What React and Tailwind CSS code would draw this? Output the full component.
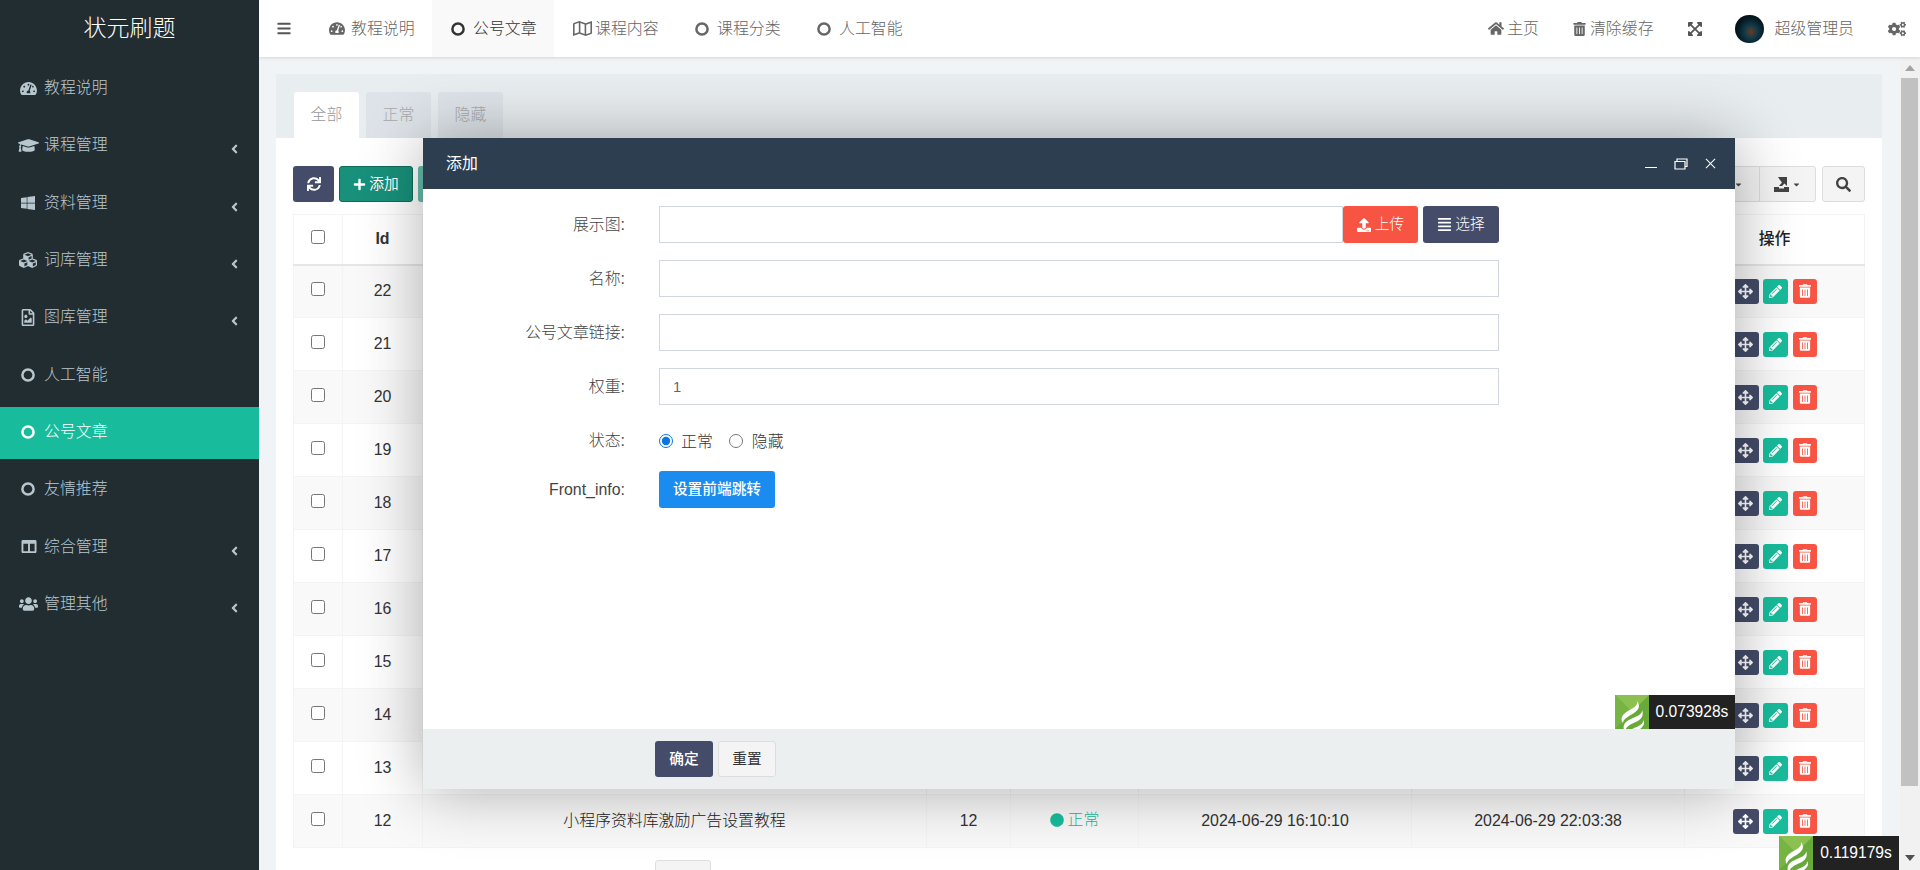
import React from "react";
import {
  FaTachometerAlt, FaGraduationCap, FaWindows, FaCubes, FaRegFileImage,
  FaColumns, FaUsers, FaAngleLeft, FaBars, FaRegMap, FaHome, FaTrashAlt, FaExpandArrowsAlt,
  FaCogs, FaSync, FaPlus, FaCaretDown, FaSearch, FaUpload, FaAlignJustify, FaArrowsAlt, FaPencilAlt, FaCircle,
} from "react-icons/fa";

// fa-circle-o has a heavier ring than the FA5 regular circle
const Ring = ({ className }) => (
  <svg viewBox="0 0 14 14" className={className} fill="none" stroke="currentColor" strokeWidth="2.5">
    <circle cx="7" cy="7" r="5.6" />
  </svg>
);

const ringCls = "w-[14px] h-[14px]";

const menu = [
  { icon: FaTachometerAlt, cls: "w-[17px] h-[15px] -ml-[1px]", label: "教程说明" },
  { icon: FaGraduationCap, cls: "w-[21px] h-[17px] -ml-[3px]", label: "课程管理", more: true },
  { icon: FaWindows, cls: "w-[16px] h-[16px] -ml-[1px]", label: "资料管理", more: true },
  { icon: FaCubes, cls: "w-[20px] h-[18px] -ml-[3px]", label: "词库管理", more: true },
  { icon: FaRegFileImage, cls: "w-[14px] h-[17px]", label: "图库管理", more: true },
  { icon: Ring, cls: ringCls, label: "人工智能" },
  { icon: Ring, cls: ringCls, label: "公号文章", active: true },
  { icon: Ring, cls: ringCls, label: "友情推荐" },
  { icon: FaColumns, cls: "w-[16px] h-[15px]", label: "综合管理", more: true },
  { icon: FaUsers, cls: "w-[19px] h-[16px] -ml-[2px]", label: "管理其他", more: true },
];

const tabs = [
  { icon: FaTachometerAlt, cls: "w-[16px] h-[15px]", label: "教程说明" },
  { icon: Ring, cls: ringCls, label: "公号文章", active: true },
  { icon: FaRegMap, cls: "w-[19px] h-[17px]", label: "课程内容" },
  { icon: Ring, cls: ringCls, label: "课程分类" },
  { icon: Ring, cls: ringCls, label: "人工智能" },
];

const ids = [22, 21, 20, 19, 18, 17, 16, 15, 14, 13, 12];

const Sidebar = () => (
  <aside className="w-[259px] shrink-0 bg-[#222d32] text-[#b8c7ce]">
    <div className="h-[63px] pb-[6px] flex items-center justify-center text-[23px] text-white">状元刷题</div>
    {menu.map((m) => (
      <div
        key={m.label}
        className={`h-[52px] mb-[5.35px] pl-[21px] pr-[20px] flex items-center text-[15.9px] ${m.active ? "bg-[#18bc9c] text-white" : ""}`}
      >
        <span className="w-[23px] pb-[2px] shrink-0"><m.icon className={m.cls} /></span>
        <span className="flex-1 pb-[2px]">{m.label}</span>
        {m.more && <FaAngleLeft className="w-[9px] h-[14px] mt-[6px]" />}
      </div>
    ))}
  </aside>
);

const Header = () => (
  <header className="relative z-10 h-[57px] bg-white shadow-[0_1px_3px_rgba(0,0,0,0.12)] flex items-center text-[15.9px] text-[#666]">
    <div className="w-[51px] h-full pl-[18px] flex items-center text-[#555]">
      <FaBars className="w-[14px] h-[15px]" />
    </div>
    {tabs.map((t) => (
      <div key={t.label} className={`w-[122px] h-full pl-[18.5px] flex items-center ${t.active ? "bg-[#f9f9f9] text-[#333]" : ""}`}>
        <span className="w-[22.5px] shrink-0"><t.icon className={`${t.cls} ${t.active ? "text-[#333]" : "text-[#666]"}`} /></span>
        <span>{t.label}</span>
      </div>
    ))}
    <div className="ml-auto flex items-center pr-[14px]">
      <FaHome className="w-[16px] h-[15px] text-[#666] mr-[3px]" />
      <span>主页</span>
      <FaTrashAlt className="w-[13px] h-[14px] text-[#666] ml-[34px] mr-[4px]" />
      <span>清除缓存</span>
      <FaExpandArrowsAlt className="w-[16px] h-[16px] text-[#555] ml-[33px]" />
      <span className="w-[29px] h-[28px] ml-[32px] rounded-full bg-[radial-gradient(ellipse_at_55%_60%,#6b3a20_0%,#123a4a_28%,#04181f_60%,#020a0e_100%)]" />
      <span className="ml-[11px]">超级管理员</span>
      <FaCogs className="w-[18px] h-[16px] text-[#666] ml-[34px]" />
    </div>
  </header>
);

const TraceLogo = () => (
  <svg viewBox="0 0 34 42" className="w-[34px] h-[42px] shrink-0">
    <rect width="34" height="42" fill="#69a93a" />
    <path d="M0 0H34L17 17Z" fill="#8cc152" />
    <path d="M0 0L17 17L0 34Z" fill="#76b543" />
    <path d="M22 6C24 12 14 14 9 19C5 23 7 27 8 28C8 24 14 21 19 18C25 14 25 10 22 6Z" fill="#fff" />
    <path d="M27 15C28 21 17 22 11 27C7 31 9 35 10 37C10 32 16 29 21 27C27 24 29 20 27 15Z" fill="#fff" />
    <path d="M28 25C29 31 19 32 14 36C11 38 12 41 13 42H20C18 38 22 36 25 34C29 31 30 28 28 25Z" fill="#fff" />
  </svg>
);

const Timer = ({ value, className }) => (
  <div className={`absolute h-[34px] flex items-start overflow-hidden ${className}`}>
    <TraceLogo />
    <div className="w-[86px] h-[34px] bg-[#222] text-white text-[15.6px] flex items-center justify-center">{value}</div>
  </div>
);

const ActionButtons = () => (
  <div className="flex justify-center gap-[4.5px] text-white">
    <span className="w-[26px] h-[25px] rounded-[3px] bg-[#444c69] flex items-center justify-center"><FaArrowsAlt className="w-[15px] h-[15px]" /></span>
    <span className="w-[25px] h-[25px] rounded-[3px] bg-[#18bc9c] flex items-center justify-center"><FaPencilAlt className="w-[13px] h-[13px]" /></span>
    <span className="w-[24px] h-[25px] rounded-[3px] bg-[#f75444] flex items-center justify-center"><FaTrashAlt className="w-[12px] h-[14px]" /></span>
  </div>
);

const cell = "border border-[#f4f4f4] text-center p-0";

const DataTable = () => (
  <table className="w-[1571px] table-fixed border-collapse text-[15.9px] text-[#333]">
    <colgroup>
      <col className="w-[49px]" />
      <col className="w-[80px]" />
      <col className="w-[504px]" />
      <col className="w-[84px]" />
      <col className="w-[128px]" />
      <col className="w-[273px]" />
      <col className="w-[273px]" />
      <col className="w-[180px]" />
    </colgroup>
    <thead>
      <tr className="h-[50px]">
        <th className={`${cell} border-b-2 border-b-[#e4e6e8]`}><input type="checkbox" className="block mx-auto w-[14px] h-[14px] mb-[5px]" /></th>
        <th className={`${cell} border-b-2 border-b-[#e4e6e8] font-bold`}>Id</th>
        <th className={`${cell} border-b-2 border-b-[#e4e6e8]`} colSpan={5} />
        <th className={`${cell} border-b-2 border-b-[#e4e6e8] font-medium text-[#222]`}>操作</th>
      </tr>
    </thead>
    <tbody>
      {ids.map((id, i) => (
        <tr key={id} className={`h-[53px] ${i % 2 === 0 ? "bg-[#f9f9f9]" : "bg-white"}`}>
          <td className={cell}><input type="checkbox" className="block mx-auto w-[14px] h-[14px] mb-[5px]" /></td>
          <td className={cell}>{id}</td>
          <td className={`${cell} text-[#222]`}>{id === 12 && "小程序资料库激励广告设置教程"}</td>
          <td className={cell}>{id === 12 && 12}</td>
          <td className={cell}>
            {id === 12 && (
              <span className="inline-flex items-center gap-[4px] text-[#18bc9c]">
                <FaCircle className="w-[14px] h-[14px]" />正常
              </span>
            )}
          </td>
          <td className={cell}>{id === 12 && "2024-06-29 16:10:10"}</td>
          <td className={cell}>{id === 12 && "2024-06-29 22:03:38"}</td>
          <td className={cell}><ActionButtons /></td>
        </tr>
      ))}
    </tbody>
  </table>
);

const Toolbar = () => (
  <div className="h-[36px] mb-[12px] flex items-center justify-between">
    <div className="flex gap-[5px] text-white text-[14.7px] font-normal">
      <span className="w-[41px] h-[36px] rounded-[3px] bg-[#444c69] flex items-center justify-center"><FaSync className="w-[14px] h-[14px]" /></span>
      <span className="w-[74px] h-[36px] rounded-[3px] bg-[#18907a] border border-[#0f6b59] flex items-center justify-center gap-[3px]"><FaPlus className="w-[13px] h-[13px]" />添加</span>
      <span className="w-[74px] h-[36px] rounded-[3px] bg-[#66bcaa]" />
    </div>
    <div className="flex gap-[6px] text-[#444]">
      <div className="flex h-[36px] rounded-[3px] bg-[#f4f4f4] border border-[#ddd] divide-x divide-[#ddd]">
        <span className="w-[60px] flex items-center justify-center gap-[4px]"><FaColumns className="w-[14px] h-[14px]" /><FaCaretDown className="w-[9px] h-[9px]" /></span>
        <span className="w-[55px] flex items-center justify-center gap-[3px]">
          <svg viewBox="0 0 15 16" className="w-[15px] h-[16px]" fill="currentColor">
            <path d="M0 11H5V12.5H10V11H15V16H0Z" />
            <path d="M4 1H13V10L10.5 7.5L8 10H5L8 6.5L6 4Z" />
          </svg>
          <FaCaretDown className="w-[9px] h-[9px]" />
        </span>
      </div>
      <span className="w-[43px] h-[36px] rounded-[3px] bg-[#f4f4f4] border border-[#ddd] flex items-center justify-center"><FaSearch className="w-[15px] h-[15px]" /></span>
    </div>
  </div>
);

const Pagination = () => (
  <div className="mt-[12px] flex items-start text-[15.9px] text-[#333]">
    <span className="mt-[7px] w-[362px]">显示第 1 到第 10 条记录，总共 19 条记录 每页显示</span>
    <span className="w-[56px] h-[36px] rounded-[3px] bg-[#f4f4f4] border border-[#ddd]" />
    <span className="mt-[7px] ml-[8px]">条记录</span>
  </div>
);

const Field = ({ label, children, className = "h-[37px] mb-[17px]" }) => (
  <div className={`flex items-center ${className}`}>
    <label className="w-[202px] shrink-0 pt-[1px] text-right text-[15.9px] text-[#444]">{label}:</label>
    <div className="ml-[34px] w-[840px] flex items-center">{children}</div>
  </div>
);

const inputCls = "w-full h-[37px] px-[13px] border border-[#d2d6de] bg-white text-[14.7px] text-[#666] outline-none";

const Modal = () => (
  <div className="absolute left-[423px] top-[138px] z-20 w-[1312px] h-[651px] flex flex-col bg-white shadow-[1px_1px_60px_rgba(0,0,0,0.32)]">
    <div className="h-[51px] shrink-0 pl-[23px] pr-[19px] bg-[#2c3e50] text-white text-[15.9px] font-normal flex items-center justify-between">
      <span>添加</span>
      <span className="flex items-center gap-[17px]">
        <svg viewBox="0 0 12 12" className="w-[12px] h-[12px]" stroke="currentColor" fill="none" strokeWidth="1"><path d="M0 9.5H12" /></svg>
        <svg viewBox="0 0 14 12" className="w-[14px] h-[12px]" stroke="currentColor" fill="none" strokeWidth="1.2"><path d="M1 3.5H11V11H1ZM3 3V1H13V8.5H11" /></svg>
        <svg viewBox="0 0 12 12" className="w-[11px] h-[11px]" stroke="currentColor" fill="none" strokeWidth="1.1"><path d="M1 1L11 11M11 1L1 11" /></svg>
      </span>
    </div>
    <div className="relative flex-1 pt-[17px] overflow-hidden">
      <Field label="展示图">
        <input className={`${inputCls} flex-1 min-w-0`} readOnly />
        <button className="w-[75px] h-[37px] shrink-0 rounded-[3px] bg-[#f75444] text-white text-[14.7px] flex items-center justify-center gap-[4px]"><FaUpload className="w-[14px] h-[14px]" />上传</button>
        <button className="w-[76px] h-[37px] shrink-0 ml-[5px] rounded-[3px] bg-[#444c69] text-white text-[14.7px] flex items-center justify-center gap-[3px]"><FaAlignJustify className="w-[15px] h-[15px]" />选择</button>
      </Field>
      <Field label="名称"><input className={inputCls} readOnly /></Field>
      <Field label="公号文章链接"><input className={inputCls} readOnly /></Field>
      <Field label="权重"><input className={inputCls} value="1" readOnly /></Field>
      <Field label="状态" className="h-[37px] mb-[12px]">
        <div className="pt-[2px] flex items-center text-[15.9px] text-[#333]">
          <input type="radio" name="status" defaultChecked className="w-[14px] h-[14px] m-0 accent-[#0b75e0]" />
          <span className="ml-[8px]">正常</span>
          <input type="radio" name="status" className="w-[14px] h-[14px] m-0 ml-[16px]" />
          <span className="ml-[9px]">隐藏</span>
        </div>
      </Field>
      <Field label="Front_info" className="h-[37px]">
        <button className="w-[116px] h-[37px] rounded-[3px] bg-[#1a8cef] text-white text-[14.7px] font-medium">设置前端跳转</button>
      </Field>
      <Timer value="0.073928s" className="right-0 bottom-0" />
    </div>
    <div className="h-[60px] shrink-0 pl-[232px] pt-[12px] bg-[#ebeff0] flex items-start gap-[5px] text-[14.7px]">
      <button className="w-[58px] h-[36px] rounded-[3px] bg-[#444c69] text-white font-medium">确定</button>
      <button className="w-[58px] h-[36px] rounded-[3px] bg-[#f4f4f4] border border-[#ddd] text-[#333] font-normal">重置</button>
    </div>
  </div>
);

const Scrollbar = () => (
  <div className="w-[20px] shrink-0 flex flex-col bg-[#f1f1f1]">
    <div className="h-[21px] flex items-center justify-center">
      <svg viewBox="0 0 10 6" className="w-[10px] h-[6px]" fill="#a3a3a3"><path d="M5 0L10 6H0Z" /></svg>
    </div>
    <div className="h-[708px] ml-[1px] mr-[2px] bg-[#c1c1c1]" />
    <div className="flex-1 flex items-end justify-center pb-[9px]">
      <svg viewBox="0 0 10 6" className="w-[10px] h-[6px]" fill="#505050"><path d="M0 0H10L5 6Z" /></svg>
    </div>
  </div>
);

export default function App() {
  return (
    <div className="relative w-[1920px] h-[870px] overflow-hidden flex bg-[#f1f4f6] font-light [font-family:'Liberation_Sans','Noto_Sans_CJK_SC',sans-serif]">
      <Sidebar />
      <div className="flex-1 min-w-0 flex flex-col">
        <Header />
        <div className="flex-1 min-h-0 flex">
          <main className="flex-1 min-w-0 overflow-hidden pt-[17px] pl-[16.5px] pr-[18px]">
            <div className="bg-white">
              <div className="h-[64px] pt-[18px] pl-[18.5px] bg-[#e8edf0] flex gap-[7px] text-[15.9px]">
                <span className="w-[65px] h-[46px] rounded-t-[3px] bg-white text-[#999] flex items-center justify-center">全部</span>
                <span className="w-[65px] h-[46px] rounded-t-[3px] bg-[#dde3e8] text-[#aaa] flex items-center justify-center">正常</span>
                <span className="w-[65px] h-[46px] rounded-t-[3px] bg-[#dde3e8] text-[#aaa] flex items-center justify-center">隐藏</span>
              </div>
              <div className="pt-[28px] pl-[17.5px] pr-[17px]">
                <Toolbar />
                <DataTable />
                <Pagination />
              </div>
            </div>
          </main>
          <Scrollbar />
        </div>
      </div>
      <Modal />
      <Timer value="0.119179s" className="z-30 left-[1779px] top-[836px]" />
    </div>
  );
}
